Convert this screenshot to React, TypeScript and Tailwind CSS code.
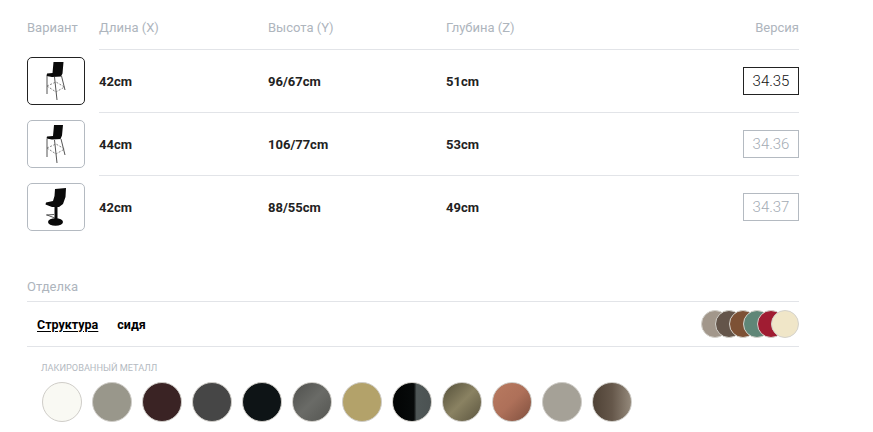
import React from "react";

const legsA = (
  <svg viewBox="28 58 56 46" className="h-full w-full">
    <path d="M53.500 62 H63.500 L62.500 73.500 L61 76.500 L52 77 L46.500 76 L47 73.500 L52.500 73 Z" fill="#0a0a0a" />
    <path d="M47 76 V94 M54.500 77 L57 100 M61.500 76 L65 90" stroke="#555" strokeWidth="1" fill="none" />
    <path d="M47 86 L56 92 L64.500 87 L56 82 Z" stroke="#666" strokeWidth="0.8" strokeDasharray="2 1.500" fill="none" />
  </svg>
);

const legsB = (
  <svg viewBox="28 121 56 46" className="h-full w-full">
    <path d="M54 125 H63 L62 135.500 L60.500 139 L52 139.500 L46.500 138.500 L47 136.500 L53 136 Z" fill="#0a0a0a" />
    <path d="M47 139 V157 M54.500 140 L57 163 M61 139 L65 155" stroke="#555" strokeWidth="1" fill="none" />
    <path d="M47 148 L56 154 L64.500 149 L56 144 Z" stroke="#666" strokeWidth="0.8" strokeDasharray="2 1.500" fill="none" />
  </svg>
);

const swivel = (
  <svg viewBox="28 184 56 46" className="h-full w-full">
    <path d="M55 189 L66 188 L65.500 197 L63 204 L59 207 L52 207 L45.500 204.500 L46 202.500 L53 201 L54.500 196 Z" fill="#0a0a0a" />
    <path d="M54.500 206 H57.500 V219 H54.500 Z" fill="#0a0a0a" />
    <path d="M46 215 L54 214.500 M47 215 L55 218" stroke="#333" strokeWidth="0.8" fill="none" />
    <ellipse cx="55.500" cy="222" rx="7.500" ry="3.800" fill="#0a0a0a" />
  </svg>
);

const rows = [
  { icon: legsA, x: "42cm", y: "96/67cm", z: "51cm", version: "34.35", active: true },
  { icon: legsB, x: "44cm", y: "106/77cm", z: "53cm", version: "34.36", active: false },
  { icon: swivel, x: "42cm", y: "88/55cm", z: "49cm", version: "34.37", active: false },
];

const stack = [
  "bg-[#a2978b]",
  "bg-[#64554a]",
  "bg-[#7d5135]",
  "bg-[#5f8677]",
  "bg-[#a01c32]",
  "bg-[#f0e6c8]",
];

const swatches = [
  "bg-[#f9f9f3]",
  "bg-[#99978b]",
  "bg-[#3a2324]",
  "bg-[#464646]",
  "bg-[#0e1416]",
  "bg-gradient-to-br from-[#4f504d] via-[#6a6b67] to-[#555652]",
  "bg-[#b3a26a]",
  "bg-[linear-gradient(90deg,#020404_0%,#070a0a_55%,#4f5757_62%,#4b5252_100%)]",
  "bg-gradient-to-br from-[#55503a] via-[#8a8262] to-[#5c5640]",
  "bg-gradient-to-br from-[#b87a60] via-[#ae7059] to-[#80503f]",
  "bg-[#a5a197]",
  "bg-gradient-to-r from-[#4f4236] via-[#65574a] to-[#94897b]",
];

export default function App() {
  return (
    <div className="h-[432px] w-[873px] overflow-hidden bg-white pl-[27px] pt-[18px] font-['Roboto','Liberation_Sans',sans-serif]">
      <div className="w-[772px]">
        <div className="flex h-[31px] items-start text-[13px] leading-[20px] text-[#aeb5bd]">
          <div className="w-[72px]">Вариант</div>
          <div className="w-[169px]">Длина (X)</div>
          <div className="w-[178px]">Высота (Y)</div>
          <div className="flex-1">Глубина (Z)</div>
          <div>Версия</div>
        </div>

        {rows.map((row) => (
          <div key={row.version} className="flex h-[63px] items-start">
            <div
              className={`mt-[8px] h-[48px] w-[58px] shrink-0 overflow-hidden rounded-[5px] border ${
                row.active ? "border-[#222]" : "border-[#b4bac1]"
              }`}
            >
              {row.icon}
            </div>
            <div className="ml-[14px] flex h-full flex-1 items-center border-t border-[#e2e4e8] text-[13px] font-bold text-[#222]">
              <div className="w-[169px] pt-[2px]">{row.x}</div>
              <div className="w-[178px] pt-[2px]">{row.y}</div>
              <div className="flex-1 pt-[2px]">{row.z}</div>
              <div
                className={`flex h-[28px] w-[56px] items-center justify-center border text-[15px] font-light ${
                  row.active ? "border-[#222] text-[#111]" : "border-[#b4bac1] text-[#a3abb4]"
                }`}
              >
                {row.version}
              </div>
            </div>
          </div>
        ))}

        <div className="mt-[39px] h-[24px] text-[13px] leading-[20px] text-[#aeb5bd]">Отделка</div>
        <div className="flex h-[46px] items-center border-y border-[#e2e4e8] pl-[10px] text-[12.5px] font-bold text-black">
          <span className="pt-[2px] underline underline-offset-2">Структура</span>
          <span className="ml-[19px] pt-[2px]">сидя</span>
          <div className="ml-auto flex">
            {stack.map((color) => (
              <div
                key={color}
                className={`-ml-[14px] h-[28px] w-[28px] rounded-full border border-[#d4d2cc] ${color}`}
              />
            ))}
          </div>
        </div>

        <div className="pl-[14px] pt-[14px]">
          <div className="text-[9.2px] leading-[14px] text-[#b4bac1]">ЛАКИРОВАННЫЙ МЕТАЛЛ</div>
          <div className="mt-[7px] flex gap-[10px] pl-[1px]">
            {swatches.map((color) => (
              <div
                key={color}
                className={`h-[40px] w-[40px] rounded-full border border-[#cfcdc8] ${color}`}
              />
            ))}
          </div>
        </div>
      </div>
    </div>
  );
}
